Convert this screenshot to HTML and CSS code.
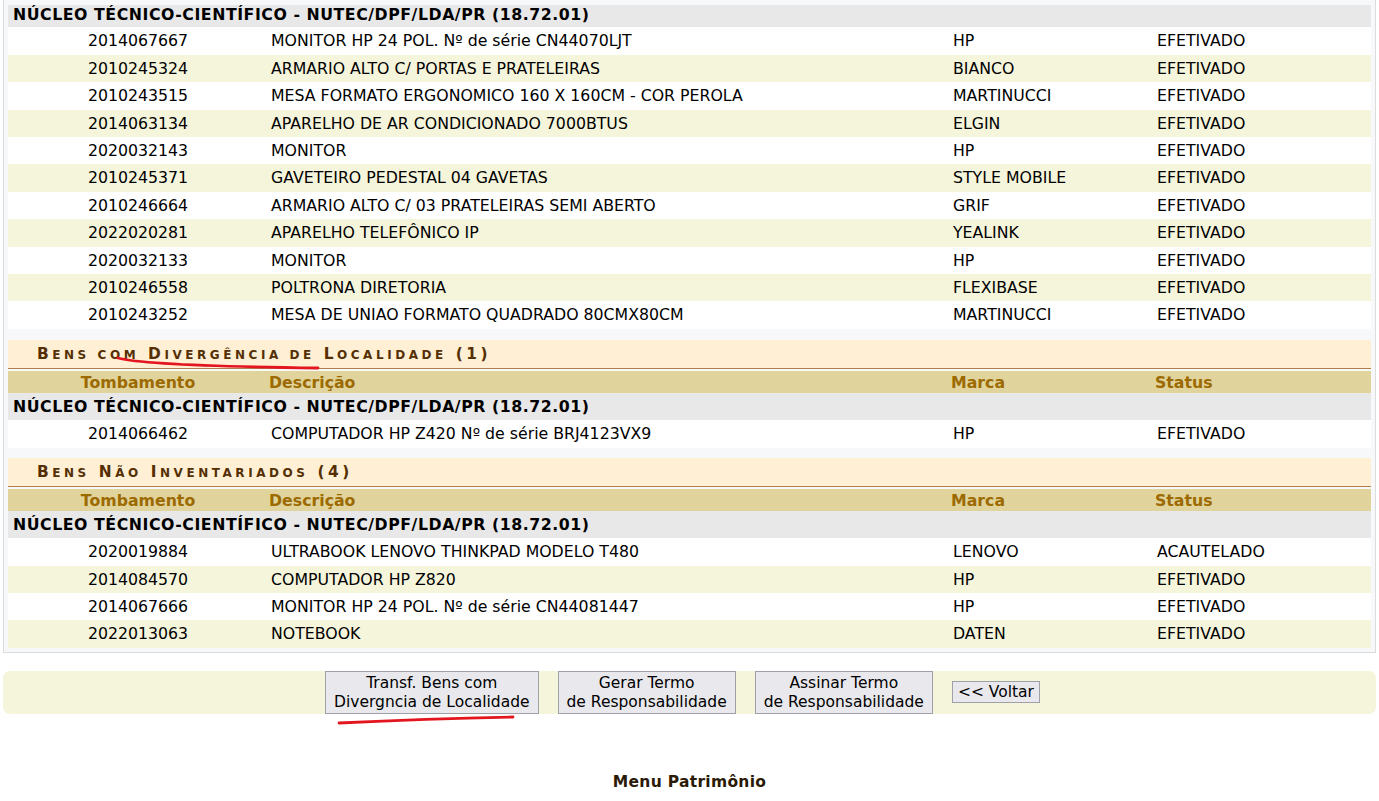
FILE: index.html
```html
<!DOCTYPE html>
<html lang="pt-BR">
<head>
<meta charset="utf-8">
<title>Patrimônio</title>
<link rel="stylesheet" href="styles.css">
</head>
<body>
<div class="page">
  <div class="panel">
    <table class="bens">
      <colgroup><col class="c1"><col class="c2"><col class="c3"><col class="c4"></colgroup>
      <tbody>
        <tr class="grupo first"><td colspan="4">NÚCLEO TÉCNICO-CIENTÍFICO - NUTEC/DPF/LDA/PR (18.72.01)</td></tr>
        <tr><td class="tomb">2014067667</td><td>MONITOR HP 24 POL. Nº de série CN44070LJT</td><td>HP</td><td>EFETIVADO</td></tr>
        <tr class="alt"><td class="tomb">2010245324</td><td>ARMARIO ALTO C/ PORTAS E PRATELEIRAS</td><td>BIANCO</td><td>EFETIVADO</td></tr>
        <tr><td class="tomb">2010243515</td><td>MESA FORMATO ERGONOMICO 160 X 160CM - COR PEROLA</td><td>MARTINUCCI</td><td>EFETIVADO</td></tr>
        <tr class="alt"><td class="tomb">2014063134</td><td>APARELHO DE AR CONDICIONADO 7000BTUS</td><td>ELGIN</td><td>EFETIVADO</td></tr>
        <tr><td class="tomb">2020032143</td><td>MONITOR</td><td>HP</td><td>EFETIVADO</td></tr>
        <tr class="alt"><td class="tomb">2010245371</td><td>GAVETEIRO PEDESTAL 04 GAVETAS</td><td>STYLE MOBILE</td><td>EFETIVADO</td></tr>
        <tr><td class="tomb">2010246664</td><td>ARMARIO ALTO C/ 03 PRATELEIRAS SEMI ABERTO</td><td>GRIF</td><td>EFETIVADO</td></tr>
        <tr class="alt"><td class="tomb">2022020281</td><td>APARELHO TELEFÔNICO IP</td><td>YEALINK</td><td>EFETIVADO</td></tr>
        <tr><td class="tomb">2020032133</td><td>MONITOR</td><td>HP</td><td>EFETIVADO</td></tr>
        <tr class="alt"><td class="tomb">2010246558</td><td>POLTRONA DIRETORIA</td><td>FLEXIBASE</td><td>EFETIVADO</td></tr>
        <tr><td class="tomb">2010243252</td><td>MESA DE UNIAO FORMATO QUADRADO 80CMX80CM</td><td>MARTINUCCI</td><td>EFETIVADO</td></tr>
      </tbody>
    </table>

    <div class="secao s1">B<span class="sc">ens com</span> D<span class="sc">ivergência de</span> L<span class="sc">ocalidade</span> (1)</div>
    <table class="bens">
      <colgroup><col class="c1"><col class="c2"><col class="c3"><col class="c4"></colgroup>
      <thead>
        <tr class="cab"><th class="tomb">Tombamento</th><th>Descrição</th><th>Marca</th><th>Status</th></tr>
      </thead>
      <tbody>
        <tr class="grupo"><td colspan="4">NÚCLEO TÉCNICO-CIENTÍFICO - NUTEC/DPF/LDA/PR (18.72.01)</td></tr>
        <tr><td class="tomb">2014066462</td><td>COMPUTADOR HP Z420 Nº de série BRJ4123VX9</td><td>HP</td><td>EFETIVADO</td></tr>
      </tbody>
    </table>

    <div class="secao s2">B<span class="sc">ens</span> N<span class="sc">ão</span> I<span class="sc">nventariados</span> (4)</div>
    <table class="bens">
      <colgroup><col class="c1"><col class="c2"><col class="c3"><col class="c4"></colgroup>
      <thead>
        <tr class="cab"><th class="tomb">Tombamento</th><th>Descrição</th><th>Marca</th><th>Status</th></tr>
      </thead>
      <tbody>
        <tr class="grupo"><td colspan="4">NÚCLEO TÉCNICO-CIENTÍFICO - NUTEC/DPF/LDA/PR (18.72.01)</td></tr>
        <tr><td class="tomb">2020019884</td><td>ULTRABOOK LENOVO THINKPAD MODELO T480</td><td>LENOVO</td><td>ACAUTELADO</td></tr>
        <tr class="alt"><td class="tomb">2014084570</td><td>COMPUTADOR HP Z820</td><td>HP</td><td>EFETIVADO</td></tr>
        <tr><td class="tomb">2014067666</td><td>MONITOR HP 24 POL. Nº de série CN44081447</td><td>HP</td><td>EFETIVADO</td></tr>
        <tr class="alt"><td class="tomb">2022013063</td><td>NOTEBOOK</td><td>DATEN</td><td>EFETIVADO</td></tr>
      </tbody>
    </table>
  </div>

  <div class="acoes">
    <button class="btn">Transf. Bens com<br>Divergncia de Localidade</button>
    <button class="btn">Gerar Termo<br>de Responsabilidade</button>
    <button class="btn">Assinar Termo<br>de Responsabilidade</button>
    <button class="btn voltar">&lt;&lt; Voltar</button>
  </div>

  <div class="menu">Menu Patrimônio</div>

  <svg class="risco" width="1379" height="801" viewBox="0 0 1379 801" aria-hidden="true">
    <path d="M118 358 C 140 364, 240 367, 318 368" />
    <path d="M339 723 C 400 720, 460 718, 513 717" />
  </svg>
</div>
</body>
</html>
```

FILE: styles.css
```css
html, body {
  margin: 0;
  padding: 0;
  background: #ffffff;
}

body {
  font-family: "DejaVu Sans", Verdana, sans-serif;
  font-size: 15.75px;
  color: #000000;
}

.page {
  position: relative;
  width: 1379px;
  height: 801px;
  overflow: hidden;
}

.panel {
  margin: 0 3px 0 3px;
  padding: 5px 4px 4px 4px;
  background: #f7f8fa;
  border: 1px solid #dcdcdc;
  border-top: 0;
}

.bens {
  width: 100%;
  border-collapse: collapse;
  table-layout: fixed;
}

.c1 { width: 260px; }
.c2 { width: 682px; }
.c3 { width: 204px; }
.c4 { width: auto; }

.bens td {
  padding: 4px 3px;
  line-height: 19.4px;
  height: 19.4px;
  white-space: nowrap;
  background: #ffffff;
}

.bens tr.alt td {
  background: #f5f5dc;
}

.bens tr.grupo td {
  background: #e8e8e8;
  font-weight: bold;
  letter-spacing: 0.55px;
  padding-left: 5px;
}

.bens tr.grupo.first td {
  padding-top: 0;
  padding-bottom: 3px;
}

.bens tr.cab th {
  background: #e0d49c;
  color: #9c6a00;
  font-weight: bold;
  text-align: left;
  padding: 2px 1px 1px 1px;
  line-height: 19px;
}

.bens tr.cab th.tomb,
.bens td.tomb {
  text-align: center;
}

.secao {
  margin-bottom: 2px;
  height: 28px;
  background: #ffefd5;
  border-bottom: 1px solid #b0804c;
  color: #552f04;
  font-weight: bold;
  text-transform: uppercase;
  letter-spacing: 3.55px;
  font-size: 15.4px;
  line-height: 28px;
  padding-left: 29px;
  white-space: nowrap;
}

.secao .sc {
  font-size: 12px;
  line-height: 1;
}

.secao.s1 { margin-top: 11px; }
.secao.s2 { margin-top: 10px; }

.acoes {
  margin: 18px 3px 0 3px;
  height: 43px;
  background: #f5f5dc;
  border-radius: 7px;
  display: flex;
  justify-content: center;
  align-items: center;
  gap: 19px;
  padding-right: 14px;
}

.btn {
  font-family: "DejaVu Sans", Verdana, sans-serif;
  font-size: 15.5px;
  line-height: 19px;
  color: #000000;
  background: #e9e9ed;
  border: 1px solid #a0a0a8;
  border-radius: 0;
  padding: 2px 8px 1px 8px;
  height: 43px;
  margin: 0;
}

.btn.voltar {
  height: 22px;
  padding: 0 5px;
}

.menu {
  margin-top: 59px;
  text-align: center;
  font-weight: bold;
  font-size: 15.5px;
  letter-spacing: 0.3px;
  color: #2a1a06;
}

.risco {
  position: absolute;
  left: 0;
  top: 0;
  pointer-events: none;
}

.risco path {
  fill: none;
  stroke: #e3161f;
  stroke-width: 2.8;
  stroke-linecap: round;
}
```
